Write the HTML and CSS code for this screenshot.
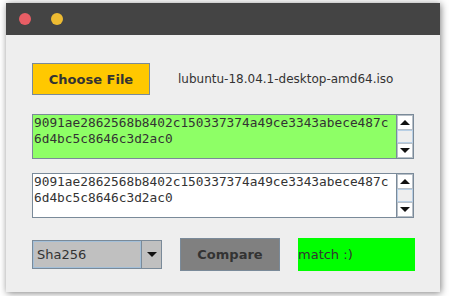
FILE: index.html
```html
<!DOCTYPE html>
<html lang="en">

<head>
    <meta charset="UTF-8" />
    <meta name="viewport" content="width=device-width, initial-scale=1.0" />
    <title>Hash Check</title>

    <link rel="stylesheet" href="styles.css">

</head>

<body>
    <div class="window">
        <div class="titlebar">
            <span class="dot dot-close"></span>
            <span class="dot dot-min"></span>
        </div>

        <div class="content">
            <div class="file-row">
                <button class="btn btn-choose" type="button">Choose File</button>
                <span class="file-name">lubuntu-18.04.1-desktop-amd64.iso</span>
            </div>

            <div class="hash-box hash-ok">
                <div class="hash-text">9091ae2862568b8402c150337374a49ce3343abece487c<br>6d4bc5c8646c3d2ac0</div>
                <div class="scrollbar">
                    <div class="sb-btn"><span class="arrow-up"></span></div>
                    <div class="sb-track"></div>
                    <div class="sb-btn"><span class="arrow-down"></span></div>
                </div>
            </div>

            <div class="hash-box">
                <div class="hash-text">9091ae2862568b8402c150337374a49ce3343abece487c<br>6d4bc5c8646c3d2ac0</div>
                <div class="scrollbar">
                    <div class="sb-btn"><span class="arrow-up"></span></div>
                    <div class="sb-track"></div>
                    <div class="sb-btn"><span class="arrow-down"></span></div>
                </div>
            </div>

            <div class="action-row">
                <div class="combo">
                    <div class="combo-value">Sha256</div>
                    <div class="combo-arrow"><span class="arrow-down"></span></div>
                </div>
                <button class="btn btn-compare" type="button">Compare</button>
                <div class="result">match :)</div>
            </div>
        </div>
    </div>
</body>

</html>
```

FILE: styles.css
```css
html,
body {
    height: 100%;
    margin: 0;
    padding: 0;
}

body {
    background: #ffffff;
    font-family: "DejaVu Sans", sans-serif;
    font-size: 12px;
    color: #333333;
}

.window {
    margin: 3px 0 0 6px;
    width: 434px;
    height: 289px;
    background: #eeeeee;
    box-shadow: 1px 1px 7px rgba(0, 0, 0, 0.5);
    display: flex;
    flex-direction: column;
}

.titlebar {
    height: 32px;
    background: #444444;
    display: flex;
    align-items: center;
    gap: 20px;
    padding-left: 13px;
}

.dot {
    width: 12px;
    height: 12px;
    border-radius: 50%;
}

.dot-close {
    background: #e85e65;
}

.dot-min {
    background: #edbb32;
}

.content {
    padding: 28px 0 0 26px;
    display: flex;
    flex-direction: column;
}

.file-row {
    display: flex;
    align-items: center;
    height: 32px;
}

.btn {
    font-family: "DejaVu Sans", sans-serif;
    font-weight: bold;
    font-size: 13px;
    color: #333333;
    border: 1px solid #7a8a99;
    padding: 0;
}

.btn-choose {
    width: 118px;
    height: 32px;
    background: #ffc800;
}

.file-name {
    margin-left: 28px;
    color: #333333;
}

.hash-box {
    width: 382px;
    height: 45px;
    margin-top: 19px;
    box-sizing: border-box;
    border: 1px solid #7a8a99;
    background: #ffffff;
    display: flex;
}

.hash-box + .hash-box {
    margin-top: 14px;
}

.hash-ok {
    background: #8eff66;
}

.hash-text {
    flex: 1;
    font-family: "DejaVu Sans Mono", monospace;
    font-size: 12.8px;
    line-height: 16px;
    padding: 0 0 0 1px;
    color: #333333;
    border-top: 1px solid #7a8a99;
    border-left: 1px solid #7a8a99;
    margin: -1px 0 0 -1px;
}

.scrollbar {
    width: 16px;
    display: flex;
    flex-direction: column;
    border-left: 1px solid #7a8a99;
    background: #eeeeee;
}

.sb-btn {
    height: 15px;
    background: #ffffff;
    border: 1px solid #b8c0c8;
    box-sizing: border-box;
    display: flex;
    align-items: center;
    justify-content: center;
}

.sb-track {
    flex: 1;
    background: #eeeeee;
    border: 1px solid #b8cfe5;
}

.arrow-up,
.arrow-down {
    width: 0;
    height: 0;
    border-left: 5px solid transparent;
    border-right: 5px solid transparent;
}

.arrow-up {
    border-bottom: 5px solid #111111;
}

.arrow-down {
    border-top: 5px solid #111111;
}

.action-row {
    display: flex;
    align-items: center;
    margin-top: 20px;
}

.combo {
    width: 130px;
    height: 29px;
    box-sizing: border-box;
    border: 1px solid #7a8a99;
    background: #c0c0c0;
    display: flex;
}

.combo-value {
    flex: 1;
    border: 1px solid #a3bfd8;
    padding-left: 3px;
    display: flex;
    align-items: center;
    font-size: 13px;
    color: #333333;
}

.combo-arrow {
    width: 19px;
    border-left: 1px solid #7a8a99;
    display: flex;
    align-items: center;
    justify-content: center;
}

.btn-compare {
    width: 100px;
    height: 33px;
    margin-left: 18px;
    background: #808080;
}

.result {
    width: 117px;
    height: 33px;
    margin-left: 18px;
    background: #00ff00;
    display: flex;
    align-items: center;
    font-size: 13px;
    color: #333333;
}
```
